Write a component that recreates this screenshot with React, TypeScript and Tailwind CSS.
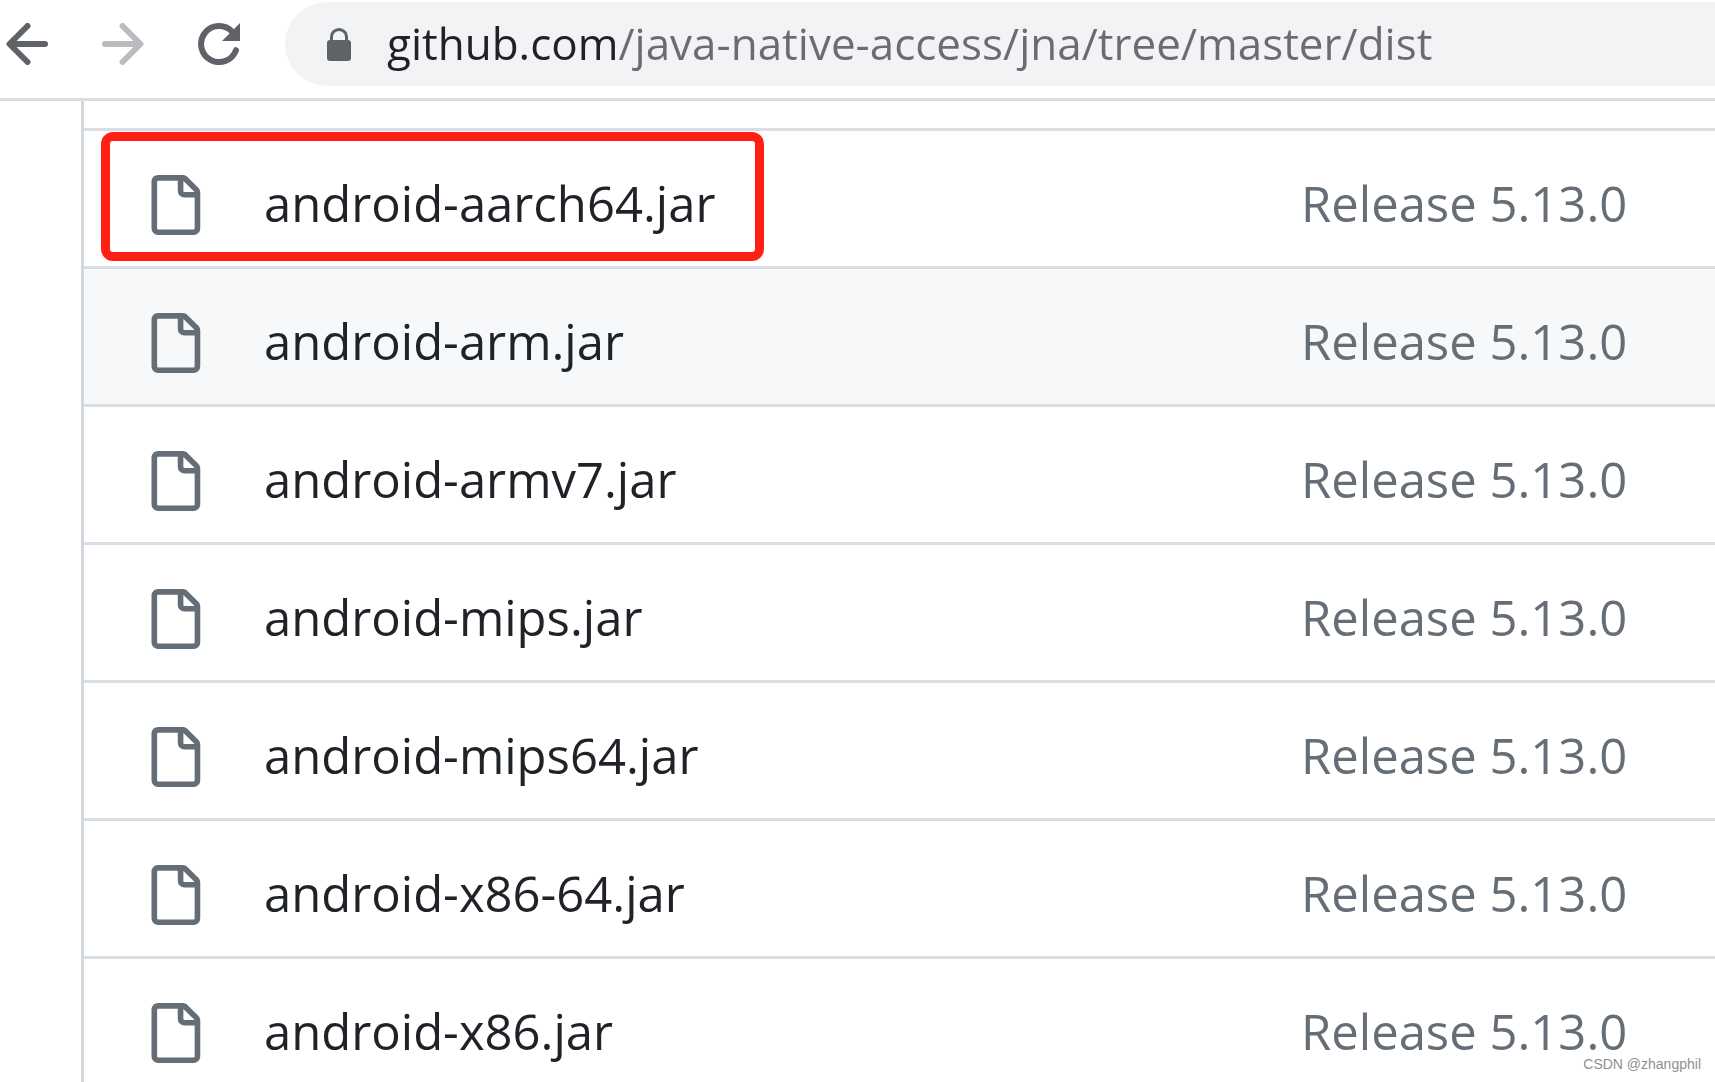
import React from "react";

const files = [
  "android-aarch64.jar",
  "android-arm.jar",
  "android-armv7.jar",
  "android-mips.jar",
  "android-mips64.jar",
  "android-x86-64.jar",
  "android-x86.jar",
];

function ArrowIcon({ className = "" }: { className?: string }) {
  return (
    <svg viewBox="0 0 42 42" className={`size-[42px] ${className}`} fill="none" stroke="currentColor" strokeWidth="6" strokeLinecap="round" strokeLinejoin="round" aria-hidden="true">
      <path d="M21.5 3 3.5 21l18 18M4 21h35" />
    </svg>
  );
}

function ReloadIcon() {
  return (
    <svg viewBox="0 0 42 42" className="size-[42px]" fill="none" aria-hidden="true">
      <path d="M38 27.2A18 18 0 1 1 34 8.5" stroke="currentColor" strokeWidth="6" strokeLinecap="round" />
      <path d="M42 0v18H24z" fill="currentColor" />
    </svg>
  );
}

function LockIcon() {
  return (
    <svg viewBox="0 0 24 33" className="h-[33px] w-6 shrink-0 text-[#5f6368]" fill="none" aria-hidden="true">
      <path d="M4.5 14V8.7a7.5 7.2 0 0 1 15 0V14" stroke="currentColor" strokeWidth="3" />
      <rect y="12" width="24" height="21" rx="3" fill="currentColor" />
    </svg>
  );
}

function FileIcon() {
  return (
    <svg viewBox="0 0 16 16" className="size-[60px] shrink-0 text-[#656d76]" fill="currentColor" aria-hidden="true">
      <path d="M2 1.75C2 .784 2.784 0 3.75 0h6.586c.464 0 .909.184 1.237.513l2.914 2.914c.329.328.513.773.513 1.237v9.586A1.75 1.75 0 0 1 13.25 16h-9.5A1.75 1.75 0 0 1 2 14.25Zm1.75-.25a.25.25 0 0 0-.25.25v12.5c0 .138.112.25.25.25h9.5a.25.25 0 0 0 .25-.25V6h-2.75A1.75 1.75 0 0 1 9 4.25V1.5Zm6.75.062V4.25c0 .138.112.25.25.25h2.688l-.011-.013-2.914-2.914-.013-.011Z" />
    </svg>
  );
}

function Toolbar() {
  return (
    <header className="flex items-start border-b-3 border-[#dadce0] pt-0.5 pb-3">
      <div className="flex h-[84px] shrink-0 items-center gap-[54px] pr-[45px] pl-1.5 text-[#5f6368]">
        <button type="button" aria-label="Back">
          <ArrowIcon />
        </button>
        <button type="button" aria-label="Forward" className="text-[#babcc0]">
          <ArrowIcon className="rotate-180" />
        </button>
        <button type="button" aria-label="Reload">
          <ReloadIcon />
        </button>
      </div>
      <div className="flex h-[84px] min-w-0 flex-1 items-center gap-9 rounded-l-full bg-[#f1f3f4] pl-[42px]">
        <LockIcon />
        <input
          type="text"
          aria-label="Address"
          defaultValue="github.com/java-native-access/jna/tree/master/dist"
          className="h-full min-w-0 flex-1 bg-linear-to-r from-[#202124] from-[231px] to-[#6b6c6f] to-[231px] bg-clip-text pb-0.5 text-[44px] text-transparent outline-none"
        />
      </div>
    </header>
  );
}

function FileTable() {
  return (
    <table className="ml-[81px] w-[calc(100%-81px)] border-separate border-spacing-0 border-l-3 border-[#d0d7de] text-[49px] leading-[64px]">
      <thead>
        <tr>
          <th scope="col" aria-label="Name" className="h-[27px] p-0" />
          <th scope="col" aria-label="Commit" className="h-[27px] w-[414px] p-0" />
        </tr>
      </thead>
      <tbody>
        {files.map((name, i) => (
          <tr key={name} className={i === 1 ? "bg-[#f6f8fa]" : "bg-white"}>
            <td className="relative border-t-3 border-[#d8dee4] px-[60px] pt-10 pb-[31px]">
              <div className="flex items-end gap-[60px]">
                <FileIcon />
                <a href={`#${name}`} className="whitespace-nowrap text-[#1f2328]">{name}</a>
              </div>
              {i === 0 && (
                <div className="pointer-events-none absolute top-px left-[17px] h-[129px] w-[663px] rounded-xl border-9 border-[#ff2013]" />
              )}
            </td>
            <td className="border-t-3 border-[#d8dee4] p-0 pt-10 pb-[31px]">
              <a href="#release" className="block whitespace-nowrap text-[#656d76]">Release 5.13.0</a>
            </td>
          </tr>
        ))}
      </tbody>
    </table>
  );
}

export default function App() {
  return (
    <div className="relative h-screen overflow-hidden bg-white font-['Open_Sans','Noto_Sans',sans-serif]">
      <Toolbar />
      <main>
        <FileTable />
      </main>
      <p className="absolute right-3.5 bottom-2 font-['Liberation_Sans',sans-serif] text-[14px] leading-5 text-[#8f8f8f]">
        CSDN @zhangphil
      </p>
    </div>
  );
}
